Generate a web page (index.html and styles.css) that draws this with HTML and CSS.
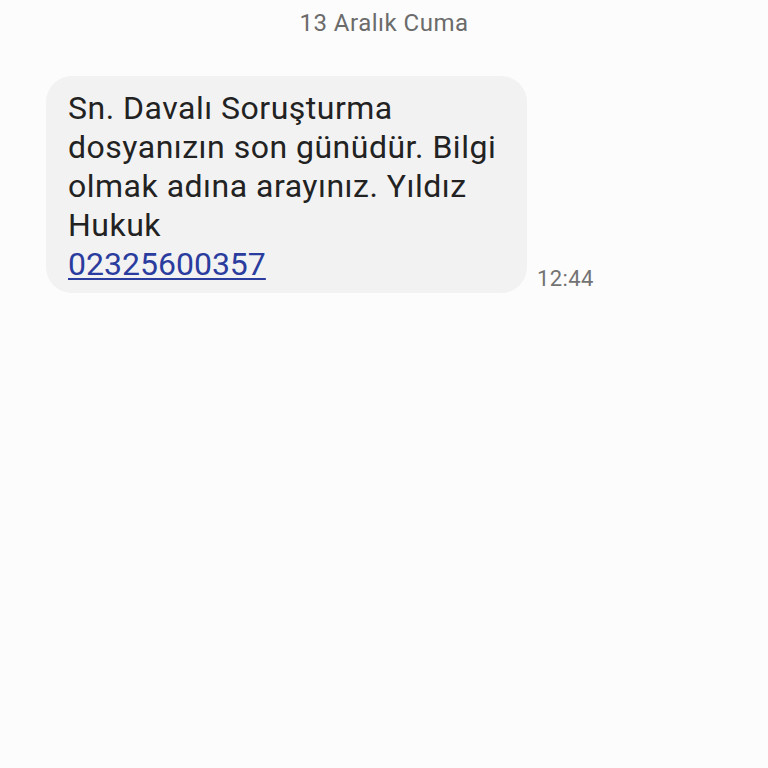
FILE: index.html
```html
<!DOCTYPE html>
<html lang="tr">
<head>
    <meta charset="UTF-8">
    <meta name="viewport" content="width=device-width, initial-scale=1.0">
    <title>Mesajlar</title>
    <link rel="stylesheet" href="styles.css">
</head>
<body>
    <div class="date-label">13 Aralık Cuma</div>

    <div class="message-row">
        <div class="bubble">
            Sn. Davalı Soruşturma dosyanızın son günüdür. Bilgi olmak adına arayınız. Yıldız Hukuk
            <a href="tel:02325600357" class="phone-link">02325600357</a>
        </div>
        <div class="message-time">12:44</div>
    </div>
</body>
</html>
```

FILE: styles.css
```css
* {
    box-sizing: border-box;
}

body {
    margin: 0;
    padding: 0;
    height: 100vh;
    background-color: #fcfcfc;
    font-family: 'Roboto', 'Noto Sans', sans-serif;
    overflow: hidden;
}

.date-label {
    text-align: center;
    font-size: 24px;
    line-height: 28px;
    letter-spacing: 0.5px;
    color: #6b6b6b;
    padding-top: 9px;
}

.message-row {
    display: flex;
    align-items: flex-end;
    gap: 10px;
    margin: 39px 0 0 46px;
}

.bubble {
    width: 481px;
    background-color: #f2f2f2;
    border-radius: 26px;
    padding: 13px 22px 9px 22px;
    font-size: 32px;
    line-height: 39px;
    letter-spacing: 0.5px;
    color: #222;
}

.phone-link {
    display: block;
    color: #2b3c9f;
    letter-spacing: 0;
    text-decoration: underline;
    text-decoration-thickness: 2px;
    text-underline-offset: 3px;
}

.message-time {
    font-size: 22px;
    line-height: 26px;
    letter-spacing: 0.4px;
    color: #737373;
    padding-bottom: 1px;
}
```
